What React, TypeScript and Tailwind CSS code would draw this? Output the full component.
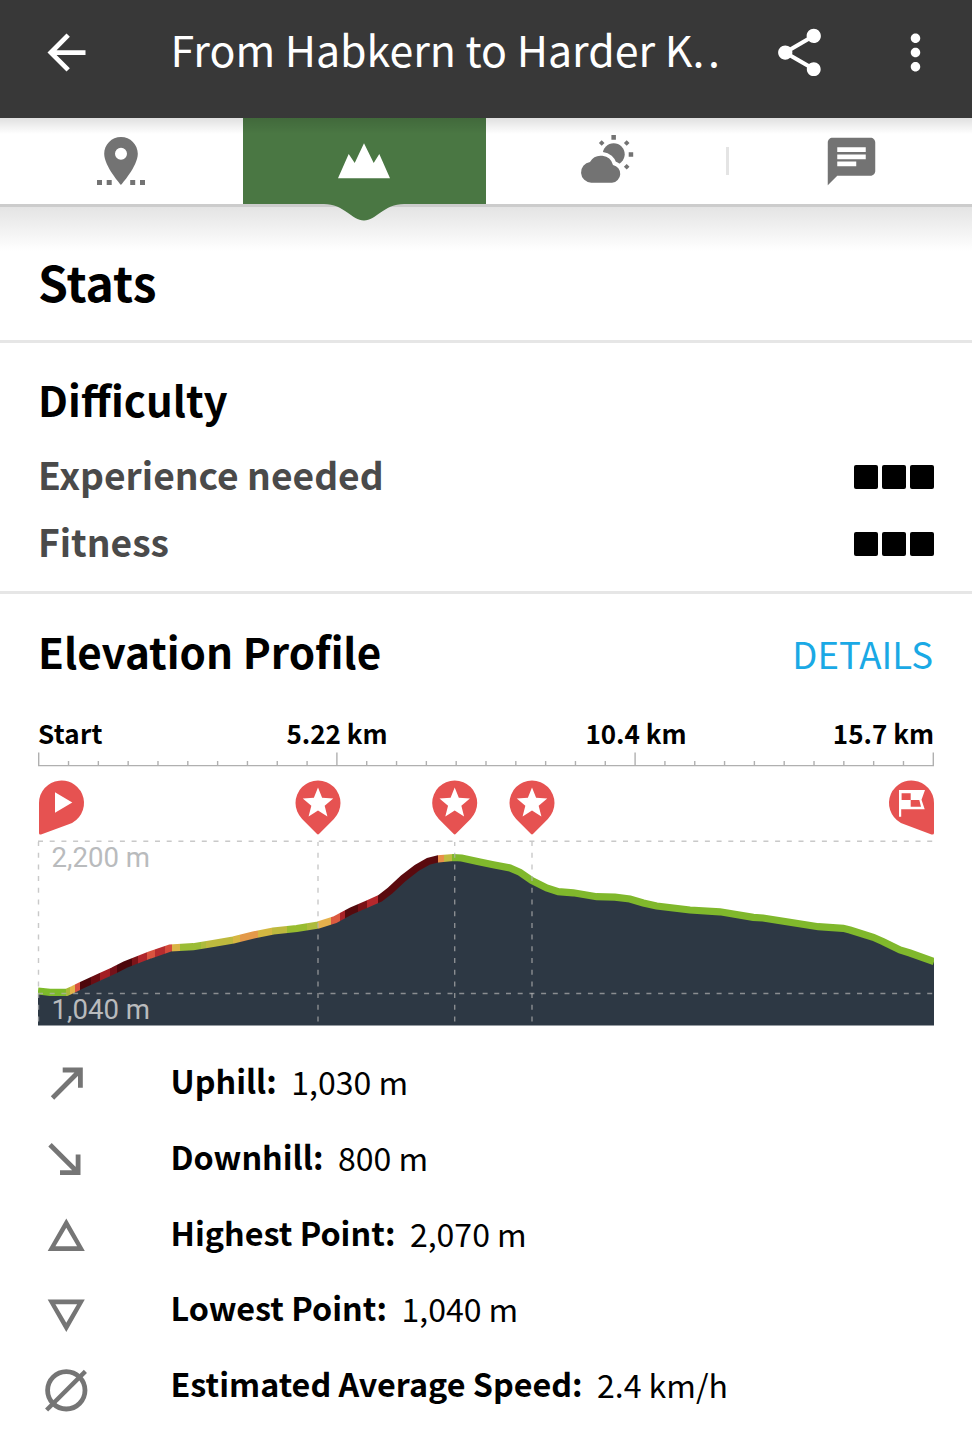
import type { ReactNode } from 'react'
import { MdArrowBack, MdChat, MdMoreVert, MdShare } from 'react-icons/md'

const CHART_WIDTH = 896
const CHART_BOTTOM = 310.5

// [x, y] along the track, in chart pixels
const profile = [
  [0, 276], [12, 277.3], [28.7, 277.3], [35, 274.5], [42, 271], [62, 261.7], [75.3, 255.7],
  [87, 249.7], [112, 240], [132, 233], [155.3, 231.7], [175, 228.5], [195.3, 225], [215.3, 220],
  [235.3, 216], [258.7, 213.5], [280.3, 210], [297, 204.7], [313.7, 195.7], [328.7, 189.3],
  [342, 183.3], [352, 175.7], [365.3, 163.3], [378.7, 153], [390.3, 146.3], [400.3, 143.8],
  [415.3, 142.5], [423.7, 143], [442, 147], [455.3, 149.7], [472, 152.9], [482, 157.3],
  [493.7, 165.5], [508.7, 173], [520.3, 176.7], [535.3, 177.8], [558.7, 181.7], [577, 182.2],
  [592, 184], [605.3, 188], [618.7, 191], [652, 195], [682, 196.8], [715.3, 202.3], [725, 203],
  [748.7, 206.7], [780.3, 211.7], [805.3, 213.3], [812, 215], [835.3, 222.3], [845.3, 226.7],
  [862, 235], [872, 238], [896, 246.5],
]

// Steepness colours, each one valid up to the given x
const steepness: [number, string][] = [
  [28, '#7dba2a'], [32, '#a9b93a'], [37, '#e3b44a'], [42, '#d9503f'], [53, '#4d070b'],
  [62, '#6b0d12'], [72, '#a31e23'], [79, '#75121a'], [94, '#4d070b'], [100, '#7d1419'],
  [109, '#b0262b'], [117, '#d9533f'], [127, '#b62c2e'], [134, '#d54a3b'], [142, '#d9b445'],
  [163, '#9bbc35'], [168, '#adbb3b'], [195, '#bdb93e'], [202, '#d6b642'], [220, '#e3994a'],
  [234, '#d3b741'], [249, '#bdb93e'], [269, '#98bc2f'], [280, '#adbb3b'], [293, '#e5b04c'],
  [302, '#dc5a40'], [307, '#a82328'], [320, '#550a0d'], [329, '#7a1217'], [340, '#b5282c'],
  [400, '#5a0a0e'], [406, '#e88f48'], [414, '#c0bb40'], [896, '#80b82c'],
]

const waypoints = [280, 416.7, 494]

const ticks = Array.from({ length: 31 }, (_, i) => i)

const line = profile.map(([x, y]) => `${x},${y}`).join(' ')

const star = Array.from({ length: 10 }, (_, i) => {
  const r = i % 2 === 0 ? 16 : 7
  const a = (Math.PI / 5) * i - Math.PI / 2
  return `${(r * Math.cos(a)).toFixed(2)},${(r * Math.sin(a) + 0.5).toFixed(2)}`
}).join(' ')

function ElevationChart() {
  return (
    <svg
      width={CHART_WIDTH}
      height={311}
      viewBox={`0 0 ${CHART_WIDTH} 311`}
      className="block overflow-visible"
    >
      <defs>
        <linearGradient id="steepness" gradientUnits="userSpaceOnUse" x1="0" y1="0" x2={CHART_WIDTH} y2="0">
          {steepness.flatMap(([end, color], i) => {
            const start = i === 0 ? 0 : steepness[i - 1][0]
            return [
              <stop key={`${i}a`} offset={start / CHART_WIDTH} stopColor={color} />,
              <stop key={`${i}b`} offset={end / CHART_WIDTH} stopColor={color} />,
            ]
          })}
        </linearGradient>
        <clipPath id="plot">
          <rect x="0" y="100" width={CHART_WIDTH} height="211" />
        </clipPath>
      </defs>

      {/* Distance scale */}
      <g className="text-[26px] font-bold" fill="#000">
        <text x="0" y="29" textLength="64.5">Start</text>
        <text x="299" y="29" textAnchor="middle">5.22 km</text>
        <text x="598" y="29" textAnchor="middle">10.4 km</text>
        <text x="896" y="29" textAnchor="end">15.7 km</text>
      </g>
      <g stroke="#b0b0b0" strokeWidth="1.4">
        <path d="M0 50.6H896" />
        {ticks.map((i) => {
          const x = 0.7 + (i * 894.6) / 30
          return <path key={i} d={`M${x} ${i % 10 === 0 ? 37.5 : 46}V50.6`} />
        })}
      </g>

      {/* Profile */}
      <g clipPath="url(#plot)">
        <polygon points={`${line} 896,${CHART_BOTTOM} 0,${CHART_BOTTOM}`} fill="#2d3844" />
        <polyline points={line} fill="none" stroke="url(#steepness)" strokeWidth="7.2" />
      </g>
      <g stroke="#b2b2b2" strokeOpacity="0.7" strokeWidth="1.4" strokeDasharray="5 6.7">
        <path d="M0 126.3H896M0 278.5H896" />
        {[0.5, ...waypoints].map((x) => (
          <path key={x} d={`M${x} 127V308`} strokeDashoffset="1" />
        ))}
      </g>
      <g className="font-['Roboto',sans-serif] text-[27.6px]" fill="#b9bbbd">
        <text x="13.5" y="152.3">2,200 m</text>
        <text x="13.5" y="304.3">1,040 m</text>
      </g>

      {/* Markers */}
      <g fill="#e65251">
        <path d="M1 88A22.5 22.5 0 1 1 30.8 109.3L3 119.4Q1 120 1 118Z" />
        <path d="M17 77.3V97.7L34.3 87.5Z" fill="#fff" />
        {waypoints.map((x) => (
          <g key={x} transform={`translate(${x} 88)`}>
            <path d="M-15.9 15.9A22.5 22.5 0 1 1 15.9 15.9L1.2 30.8Q0 32 -1.2 30.8Z" />
            <polygon points={star} fill="#fff" />
          </g>
        ))}
        <path d="M896 88A22.5 22.5 0 1 0 866.2 109.3L893.5 119.4Q896 120 896 118Z" />
        <path d="M861 75H887L883.5 84.7L886.7 94.3H863.2V101.7H861Z" fill="#fff" />
        <path d="M863.6 78.3H872.7V85H863.6ZM872.7 85H881.3L883 91.7H872.7Z" />
      </g>
    </svg>
  )
}

function PlaceIcon() {
  return (
    <svg width="50" height="50" viewBox="0 0 50 50" fill="#737373">
      <path
        fillRule="evenodd"
        d="M25 1C15.7 1 8.2 8.5 8.2 17.8C8.2 30.4 25 49 25 49S41.8 30.4 41.8 17.8C41.8 8.5 34.3 1 25 1ZM25 23.8A6 6 0 1 1 25 11.8A6 6 0 0 1 25 23.8Z"
      />
      <path d="M1 44h5v5H1zM10.7 44h5v5h-5zM34.2 44h5v5h-5zM44 44h5v5h-5z" />
    </svg>
  )
}

function MountainIcon() {
  return (
    <svg width="52" height="50" viewBox="0 0 52 50" fill="#fff">
      <path d="M0 42.3L10.7 18L16.7 27L26 7.3L35.7 27L41.3 18L52 42.3Z" />
    </svg>
  )
}

function WeatherIcon() {
  return (
    <svg width="54" height="50" viewBox="0 0 54 50" fill="#737373" className="overflow-visible">
      <circle cx="33.7" cy="18.3" r="11" />
      <path d="M31.4 -1h4.5v4.7h-4.5zM48.7 16.2h4.5v4.5h-4.5z" />
      <path d="M21.7 4.2l2.8 2.8l-2.8 2.8l-2.8-2.8zM46.7 4.2l2.8 2.8l-2.8 2.8l-2.8-2.8zM46.7 27.9l2.8 2.8l-2.8 2.8l-2.8-2.8z" />
      <path
        d="M11.3 46.7A10.4 10.4 0 0 1 10 26A12.6 12.6 0 0 1 33 28.9A9 9 0 0 1 32 46.7Z"
        stroke="#fff"
        strokeWidth="8"
        paintOrder="stroke"
      />
    </svg>
  )
}

function StatIcon({ children }: { children: ReactNode }) {
  return (
    <svg
      width="48"
      height="52"
      viewBox="0 -2 48 52"
      fill="none"
      stroke="#757575"
      strokeWidth="4.8"
      className="shrink-0"
    >
      {children}
    </svg>
  )
}

const stats = [
  {
    label: 'Uphill:',
    value: '1,030 m',
    icon: <path d="M10.5 39L38.4 11M20.7 11H38.4V28.7" />,
  },
  {
    label: 'Downhill:',
    value: '800 m',
    icon: <path d="M8 9.7L36.1 37.7M18 37.7H36.1V19.6" />,
  },
  {
    label: 'Highest Point:',
    value: '2,070 m',
    icon: (
      <path
        d="M24.3 8.6L42.8 40.9H5.7ZM24.3 17.7L13.4 36.3H35.1Z"
        fill="#757575"
        fillRule="evenodd"
        stroke="none"
      />
    ),
  },
  {
    label: 'Lowest Point:',
    value: '1,040 m',
    icon: (
      <path
        d="M24.3 45.9L42.8 13.6H5.7ZM24.3 36.8L13.4 18.2H35.1Z"
        fill="#757575"
        fillRule="evenodd"
        stroke="none"
      />
    ),
  },
  {
    label: 'Estimated Average Speed:',
    value: '2.4 km/h',
    icon: (
      <>
        <circle cx="24.3" cy="28.3" r="18.7" />
        <path d="M4.6 48L43.4 9.4" strokeWidth="4.4" />
      </>
    ),
  },
]

function Rating({ label }: { label: string }) {
  return (
    <div className="flex h-[66.7px] items-center justify-between">
      <span className="pt-0.5 text-[37.2px] leading-[66px] font-bold text-[#4a4a4a]">{label}</span>
      <div className="flex gap-1 pt-[7px]">
        <span className="size-6 rounded-[2px] bg-black" />
        <span className="size-6 rounded-[2px] bg-black" />
        <span className="size-6 rounded-[2px] bg-black" />
      </div>
    </div>
  )
}

export default function App() {
  return (
    <div className="h-[1444px] w-[972px] overflow-hidden bg-white font-['Noto_Sans_CJK_JP','Noto_Sans_CJK_SC',sans-serif] text-black">
      <header className="flex h-[118px] items-center bg-[#383838] pb-[13px] pl-[38px] text-white">
        <MdArrowBack size={57} />
        <h1 className="mb-[9px] ml-[75.5px] w-[579.5px] text-[42.9px] leading-[60px] whitespace-nowrap">
          From Habkern to Harder K<span className="tracking-[3.5px]">..</span>
        </h1>
        <MdShare size={57} className="ml-[21px]" />
        <MdMoreVert size={57} className="ml-[59px]" />
      </header>

      <nav className="relative grid h-[89px] grid-cols-4 border-b-[3px] border-[#cccccc]">
        <div className="flex items-center justify-center pr-px">
          <PlaceIcon />
        </div>
        <div className="flex items-center justify-center bg-[#4a7743] pr-px">
          <MountainIcon />
        </div>
        <div className="flex items-center justify-center pr-0.5">
          <WeatherIcon />
        </div>
        <div className="flex items-center">
          <span className="-ml-[3px] h-7 w-[3px] bg-[#e4e4e4]" />
          <MdChat size={57} className="ml-[94px] text-[#737373]" />
        </div>
        <div className="absolute inset-x-0 top-0 h-4 bg-linear-to-b from-black/12 to-transparent" />
        <svg className="absolute top-[86px] left-[324px] z-10" width="80" height="17" viewBox="0 0 80 17">
          <path d="M0 0C20 0 28 16.5 40 16.5C52 16.5 60 0 80 0Z" fill="#4a7743" />
        </svg>
      </nav>

      <section className="h-[136px] border-b-[3px] border-[#e6e6e6] bg-linear-to-b from-[#e4e4e4] to-white to-[44px] px-[38px] pt-[44px]">
        <h2 className="text-[48px] leading-[60px] font-bold">Stats</h2>
      </section>

      <section className="h-[251px] border-b-[3px] border-[#e6e6e6] px-[38px] pt-[28px]">
        <h3 className="mb-[13px] text-[42px] leading-[56px] font-bold">Difficulty</h3>
        <Rating label="Experience needed" />
        <Rating label="Fitness" />
      </section>

      <section className="px-[38px] pt-[29px]">
        <div className="mb-[36px] flex h-14 items-baseline justify-between">
          <h3 className="text-[42.2px] leading-[56px] font-bold">Elevation Profile</h3>
          <a className="pr-px text-[36.6px] leading-[56px] text-[#1aa9e5]">DETAILS</a>
        </div>

        <ElevationChart />

        <ul className="mt-[19px]">
          {stats.map((stat) => (
            <li key={stat.label} className="flex h-[75.7px] items-center pl-1">
              <StatIcon>{stat.icon}</StatIcon>
              <span className="mb-[5px] ml-[80.5px] text-[32.3px] leading-10 font-bold">{stat.label}</span>
              <span className="mb-[3px] ml-[14.5px] text-[32px] leading-10">{stat.value}</span>
            </li>
          ))}
        </ul>
      </section>
    </div>
  )
}
